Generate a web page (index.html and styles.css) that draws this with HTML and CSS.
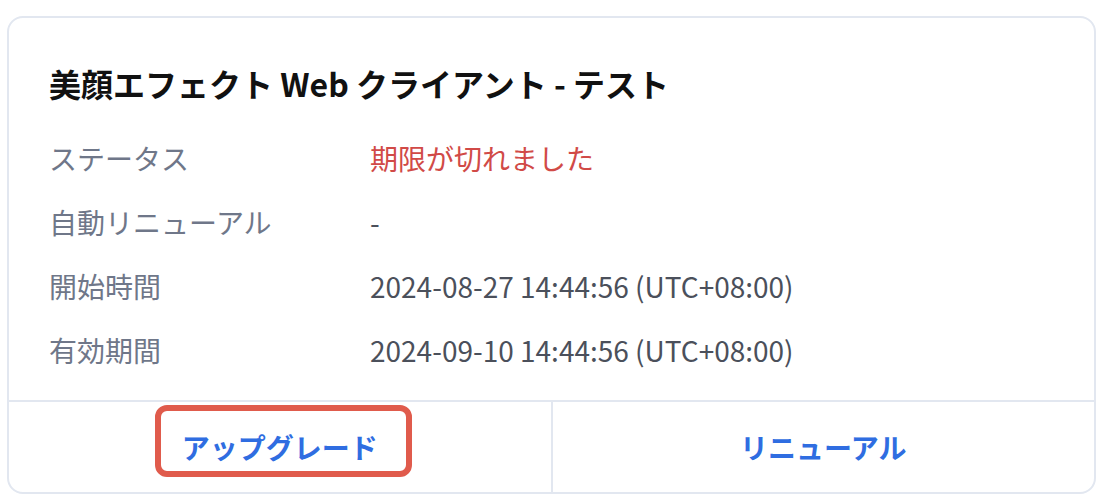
FILE: index.html
```html
<!DOCTYPE html>
<html lang="ja">
<head>
  <meta charset="UTF-8">
  <meta name="viewport" content="width=device-width, initial-scale=1.0">
  <title>サブスクリプション</title>
  <link rel="stylesheet" href="styles.css">
</head>
<body>
  <div class="card">
    <div class="card-body">
      <h1 class="card-title">美顔エフェクト Web クライアント - テスト</h1>
      <dl class="info">
        <dt>ステータス</dt>
        <dd class="expired">期限が切れました</dd>
        <dt>自動リニューアル</dt>
        <dd>-</dd>
        <dt>開始時間</dt>
        <dd>2024-08-27 14:44:56 (UTC+08:00)</dd>
        <dt>有効期間</dt>
        <dd>2024-09-10 14:44:56 (UTC+08:00)</dd>
      </dl>
    </div>
    <div class="card-actions">
      <button class="action">アップグレード</button>
      <button class="action">リニューアル</button>
      <div class="highlight"></div>
    </div>
  </div>
</body>
</html>
```

FILE: styles.css
```css
* {
  margin: 0;
  padding: 0;
  box-sizing: border-box;
}

body {
  background: #fff;
  font-family: "Noto Sans CJK JP", "Noto Sans", sans-serif;
  padding: 16px 16px 0 7px;
}

.card {
  width: 1089px;
  height: 478px;
  border: 2px solid #e2e7f0;
  border-radius: 16px;
  display: flex;
  flex-direction: column;
  overflow: hidden;
}

.card-body {
  flex: 1;
  padding: 43px 40px 0;
}

.card-title {
  font-size: 32px;
  font-weight: 700;
  line-height: 44px;
  color: #111;
  margin-bottom: 33px;
}

.info {
  display: grid;
  grid-template-columns: 321px 1fr;
  row-gap: 24px;
  font-size: 28px;
  line-height: 40px;
}

.info dt {
  color: #6f7789;
}

.info dd {
  color: #4b505b;
}

.info dd.expired {
  color: #d14a47;
}

.card-actions {
  position: relative;
  height: 92px;
  border-top: 2px solid #e2e7f0;
  display: flex;
}

.action {
  flex: 1;
  border: none;
  background: none;
  font-family: inherit;
  font-size: 28px;
  font-weight: 700;
  color: #2f6de1;
  cursor: pointer;
}

.action + .action {
  border-left: 2px solid #e2e7f0;
}

.highlight {
  position: absolute;
  left: 146px;
  top: 3px;
  width: 257px;
  height: 72px;
  border: 6px solid #e05b4c;
  border-radius: 12px;
  pointer-events: none;
}
```
